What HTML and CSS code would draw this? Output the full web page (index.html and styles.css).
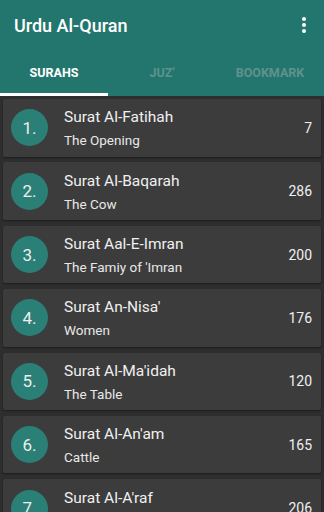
FILE: index.html
```html
<!DOCTYPE html>
<html>
<head>
<meta charset="utf-8">
<link rel="stylesheet" href="styles.css">
</head>
<body>
<header class="appbar">
  <div class="toolbar">
    <div class="title">Urdu Al-Quran</div>
    <svg class="more" width="4" height="16" viewBox="0 0 4 16"><circle cx="2" cy="2" r="2" fill="#fff"/><circle cx="2" cy="8" r="2" fill="#fff"/><circle cx="2" cy="14" r="2" fill="#fff"/></svg>
  </div>
  <nav class="tabs">
    <div class="tab active">SURAHS</div>
    <div class="tab">JUZ'</div>
    <div class="tab">BOOKMARK</div>
  </nav>
</header>
<main class="list">
  <div class="card"><div class="num">1.</div><div class="info"><div class="name">Surat Al-Fatihah</div><div class="sub">The Opening</div></div><div class="count">7</div></div>
  <div class="card"><div class="num">2.</div><div class="info"><div class="name">Surat Al-Baqarah</div><div class="sub">The Cow</div></div><div class="count">286</div></div>
  <div class="card"><div class="num">3.</div><div class="info"><div class="name">Surat Aal-E-Imran</div><div class="sub">The Famiy of 'Imran</div></div><div class="count">200</div></div>
  <div class="card"><div class="num">4.</div><div class="info"><div class="name">Surat An-Nisa'</div><div class="sub">Women</div></div><div class="count">176</div></div>
  <div class="card"><div class="num">5.</div><div class="info"><div class="name">Surat Al-Ma'idah</div><div class="sub">The Table</div></div><div class="count">120</div></div>
  <div class="card"><div class="num">6.</div><div class="info"><div class="name">Surat Al-An'am</div><div class="sub">Cattle</div></div><div class="count">165</div></div>
  <div class="card"><div class="num">7.</div><div class="info"><div class="name">Surat Al-A'raf</div><div class="sub">The Heights</div></div><div class="count">206</div></div>
</main>
</body>
</html>
```
FILE: styles.css
```css
* { box-sizing: border-box; }
html, body { margin: 0; padding: 0; }
body {
  width: 324px;
  height: 512px;
  overflow: hidden;
  background: #2e2e2e;
  font-family: Roboto, "Noto Sans", sans-serif;
  color: #f0f0f0;
}
.appbar { background: #23766e; }
.toolbar {
  height: 48px;
  display: flex;
  align-items: center;
  justify-content: space-between;
  padding: 2px 18px 0 14px;
}
.title { font-size: 18px; font-weight: 500; color: #fff; }
.more { display: block; }
.tabs { display: flex; height: 48px; }
.tab {
  flex: 1;
  display: flex;
  align-items: center;
  justify-content: center;
  font-size: 12.5px;
  font-weight: 700;
  color: #5f928c;
  border-bottom: 3px solid transparent;
  padding-top: 4px;
}
.tab.active { color: #fff; border-bottom-color: #fff; }
.list { padding: 3px 3px 0; }
.card {
  height: 57.5px;
  margin-bottom: 5.9px;
  background: #3c3c3c;
  border-radius: 2px;
  box-shadow: 0 1px 2px rgba(0,0,0,0.4);
  display: flex;
  align-items: center;
  padding: 0 9px 0 8px;
}
.num {
  width: 37px;
  height: 37px;
  border-radius: 50%;
  background: #2a7f76;
  flex: none;
  display: flex;
  align-items: center;
  justify-content: center;
  font-size: 17px;
  color: #eee;
}
.info { flex: 1; margin-left: 16px; padding-top: 1px; }
.name { font-size: 15.5px; line-height: 20px; color: #f0f0f0; }
.sub { font-size: 13.5px; line-height: 18px; margin-top: 4px; color: #e8e8e8; }
.count { font-size: 14px; color: #f0f0f0; }
```
